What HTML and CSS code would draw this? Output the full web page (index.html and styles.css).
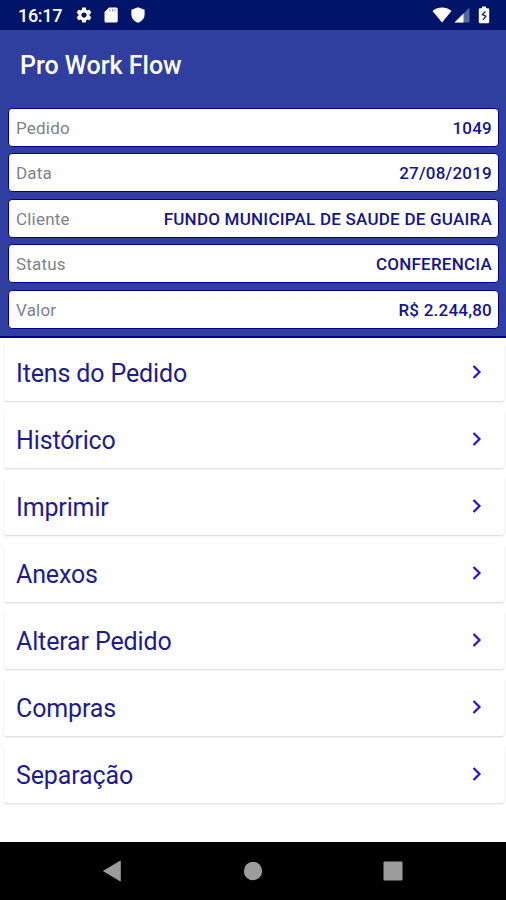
FILE: index.html
```html
<!DOCTYPE html>
<html lang="pt-BR">
<head>
<meta charset="utf-8">
<title>Pro Work Flow</title>
<link rel="stylesheet" href="styles.css">
</head>
<body>
<div class="statusbar">
  <span class="clock">16:17</span>
  <svg class="gear" width="18" height="18" viewBox="0 0 24 24"><path fill="#fff" d="M19.43 12.98c.04-.32.07-.64.07-.98s-.03-.66-.07-.98l2.11-1.65c.19-.15.24-.42.12-.64l-2-3.46c-.12-.22-.39-.3-.61-.22l-2.49 1c-.52-.4-1.08-.73-1.69-.98l-.38-2.65C14.46 2.18 14.25 2 14 2h-4c-.25 0-.46.18-.49.42l-.38 2.65c-.61.25-1.17.59-1.69.98l-2.49-1c-.23-.09-.49 0-.61.22l-2 3.46c-.13.22-.07.49.12.64l2.11 1.65c-.04.32-.07.65-.07.98s.03.66.07.98l-2.11 1.65c-.19.15-.24.42-.12.64l2 3.46c.12.22.39.3.61.22l2.49-1c.52.4 1.08.73 1.69.98l.38 2.65c.03.24.24.42.49.42h4c.25 0 .46-.18.49-.42l.38-2.65c.61-.25 1.17-.59 1.69-.98l2.49 1c.23.09.49 0 .61-.22l2-3.46c.12-.22.07-.49-.12-.64l-2.11-1.65zM12 15.5c-1.93 0-3.5-1.57-3.5-3.5s1.57-3.5 3.5-3.5 3.5 1.57 3.5 3.5-1.57 3.5-3.5 3.5z"/></svg>
  <svg class="sd" width="14" height="16" viewBox="0 0 14 16"><path fill="#fff" d="M5 .5h7.200a1.500 1.500 0 0 1 1.500 1.500v12a1.500 1.500 0 0 1-1.500 1.500H2A1.500 1.500 0 0 1 .5 14V5z"/><path stroke="#00146a" stroke-opacity=".45" stroke-width="1" d="M6 2v2.500M8.500 2v2.500M11 2v2.500"/></svg>
  <svg class="shield" width="14" height="16" viewBox="0 0 14 16"><path fill="#fff" d="M7 .2l6.600 2.500v4.800c0 3.700-2.800 7-6.600 8.200C3.200 14.500.4 11.200.4 7.500V2.700z"/></svg>
  <svg class="wifi" width="20" height="16" viewBox="0 0 20 16"><path fill="#fff" d="M.5 4C6-.6 14-.6 19.500 4L10 15.600z"/></svg>
  <svg class="signal" width="16" height="16" viewBox="0 0 16 16"><path fill="#fff" fill-opacity=".35" d="M15.500.5v15H.5z"/><path fill="#fff" d="M9.500 6.500v9H.5z"/></svg>
  <svg class="battery" width="12" height="18" viewBox="0 0 12 18"><path fill="#fff" d="M4 .5h4v1.700h2a1.200 1.200 0 0 1 1.200 1.200v12.600a1.200 1.200 0 0 1-1.200 1.200H2A1.200 1.200 0 0 1 .8 16V3.400A1.200 1.200 0 0 1 2 2.200h2z"/><path fill="none" stroke="#00146a" stroke-width="1.200" d="M7.500 5.500L4.300 8.500l3.600 1.700L5 14"/></svg>
</div>
<header class="header">
  <h1 class="title">Pro Work Flow</h1>
  <div class="fields">
    <div class="field"><span class="label">Pedido</span><span class="value">1049</span></div>
    <div class="field"><span class="label">Data</span><span class="value">27/08/2019</span></div>
    <div class="field"><span class="label">Cliente</span><span class="value">FUNDO MUNICIPAL DE SAUDE DE GUAIRA</span></div>
    <div class="field"><span class="label">Status</span><span class="value">CONFERENCIA</span></div>
    <div class="field"><span class="label">Valor</span><span class="value">R$ 2.244,80</span></div>
  </div>
</header>
<main class="menu">
  <div class="card"><span>Itens do Pedido</span><svg width="10" height="14" viewBox="0 0 10 14"><path class="chevron" d="M1.500 1l6 6-6 6"/></svg></div>
  <div class="card"><span>Histórico</span><svg width="10" height="14" viewBox="0 0 10 14"><path class="chevron" d="M1.500 1l6 6-6 6"/></svg></div>
  <div class="card"><span>Imprimir</span><svg width="10" height="14" viewBox="0 0 10 14"><path class="chevron" d="M1.500 1l6 6-6 6"/></svg></div>
  <div class="card"><span>Anexos</span><svg width="10" height="14" viewBox="0 0 10 14"><path class="chevron" d="M1.500 1l6 6-6 6"/></svg></div>
  <div class="card"><span>Alterar Pedido</span><svg width="10" height="14" viewBox="0 0 10 14"><path class="chevron" d="M1.500 1l6 6-6 6"/></svg></div>
  <div class="card"><span>Compras</span><svg width="10" height="14" viewBox="0 0 10 14"><path class="chevron" d="M1.500 1l6 6-6 6"/></svg></div>
  <div class="card"><span>Separação</span><svg width="10" height="14" viewBox="0 0 10 14"><path class="chevron" d="M1.500 1l6 6-6 6"/></svg></div>
</main>
<nav class="navbar">
  <svg width="20" height="22" viewBox="0 0 20 22"><path fill="#9c9c9c" d="M.8 11L18 .8q.8-.3.800.5v19.400q0 .8-.8.500z"/></svg>
  <svg width="20" height="20" viewBox="0 0 20 20"><circle cx="10" cy="10" r="9.200" fill="#9c9c9c"/></svg>
  <svg width="20" height="20" viewBox="0 0 20 20"><rect x=".5" y=".5" width="19" height="19" rx="1" fill="#9c9c9c"/></svg>
</nav>
</body>
</html>
```
FILE: styles.css
```css
* { box-sizing: border-box; }
body {
  margin: 0;
  width: 506px;
  height: 900px;
  display: flex;
  flex-direction: column;
  overflow: hidden;
  background: #fff;
  font-family: Roboto, "Liberation Sans", sans-serif;
}
svg { display: block; flex: none; }
.statusbar {
  flex: none;
  height: 30px;
  display: flex;
  align-items: center;
  padding: 0 16px 0 18px;
  background: #00146a;
  color: #fff;
}
.clock { width: 44px; padding-top: 1px; font-size: 18px; font-weight: 500; letter-spacing: -.3px; line-height: 30px; white-space: nowrap; }
.gear { margin-left: 13px; }
.sd { margin-left: 11px; }
.shield { margin-left: 13px; }
.wifi { margin-left: auto; }
.signal { margin-left: 2px; }
.battery { margin-left: 8px; }
.header {
  flex: none;
  height: 308px;
  background: #303f9f;
  border-bottom: 2px solid #00008c;
}
.title {
  margin: 0;
  padding-left: 20px;
  height: 78px;
  line-height: 71px;
  font-size: 25px;
  font-weight: 500;
  color: #fff;
}
.fields { display: flex; flex-direction: column; gap: 6.400px; padding: 0 7px 0 8px; }
.field {
  height: 39px;
  display: flex;
  align-items: center;
  justify-content: space-between;
  padding: 1px 6px 0 7px;
  background: #fff;
  border: 1.500px solid #00008c;
  border-radius: 4px;
  font-size: 17px;
  letter-spacing: .2px;
}
.label { color: #7c838b; }
.value { color: #14148c; font-weight: 500; letter-spacing: .23px; }
.menu { flex: 1; display: flex; flex-direction: column; gap: 9px; padding: 5px 2px 0 4px; }
.card {
  height: 58px;
  display: flex;
  align-items: center;
  justify-content: space-between;
  padding: 0 22px 0 12px;
  background: #fff;
  border-radius: 2px;
  box-shadow: 0 1px 2px rgba(0, 0, 0, .16);
  font-size: 25px;
  letter-spacing: -.14px;
  color: #1c1c90;
}
.card span { padding-top: 2px; }
.chevron { fill: none; stroke: #2414dc; stroke-width: 2.200; }
.navbar {
  flex: none;
  height: 58px;
  display: flex;
  align-items: center;
  justify-content: space-between;
  padding: 0 103px 0 102px;
  background: #000;
}
```
